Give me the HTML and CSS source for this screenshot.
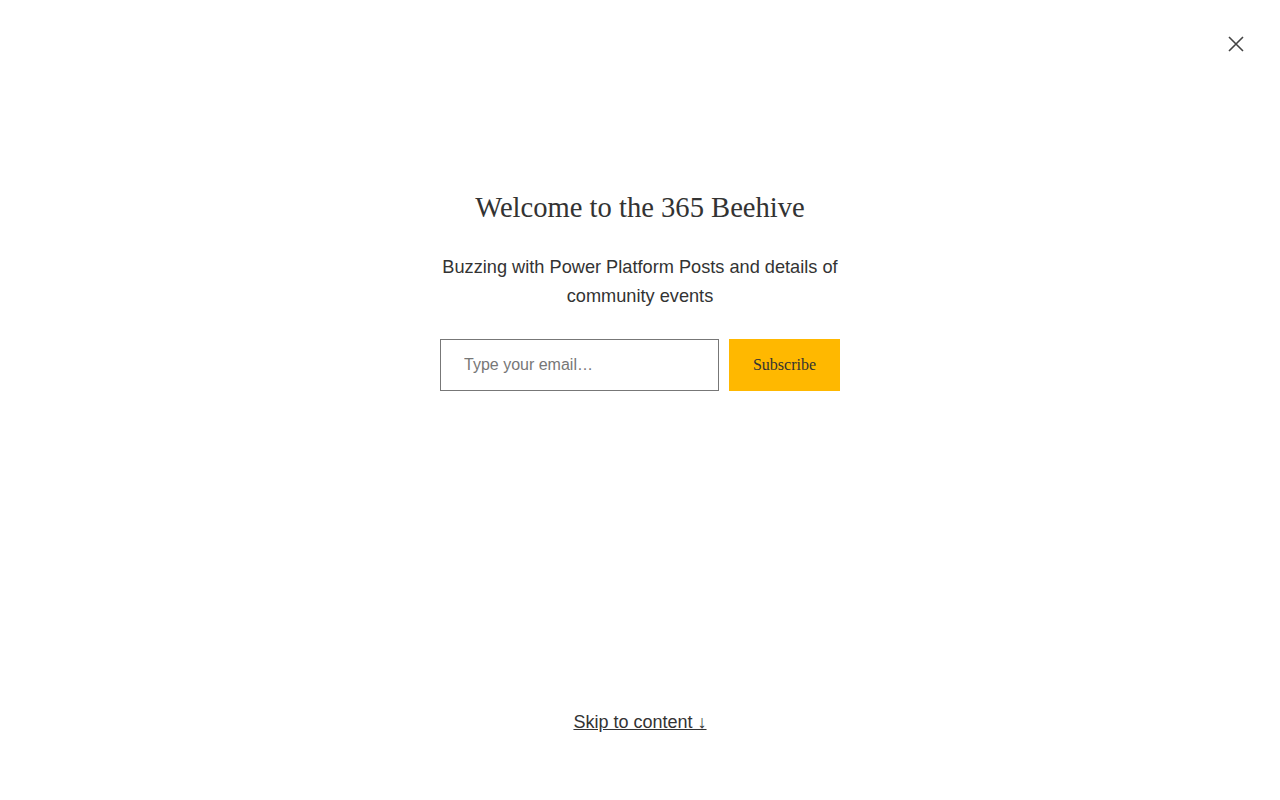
FILE: index.html
```html
<!DOCTYPE html>
<html lang="en">
<head>
<meta charset="utf-8">
<title>Welcome to the 365 Beehive</title>
<link rel="stylesheet" href="styles.css">
</head>
<body>
<div class="page">
  <button class="close" aria-label="Close">
    <svg width="18" height="18" viewBox="0 0 18 18"><path d="M2 2 L16 16 M16 2 L2 16" stroke="#444" stroke-width="1.6" fill="none"/></svg>
  </button>
  <main class="panel">
    <h1 class="title">Welcome to the 365 Beehive</h1>
    <p class="lead">Buzzing with Power Platform Posts and details of community events</p>
    <form class="signup">
      <input class="email" type="email" placeholder="Type your email…">
      <button class="subscribe" type="button">Subscribe</button>
    </form>
  </main>
  <a class="skip" href="#">Skip to content ↓</a>
</div>
</body>
</html>
```
FILE: styles.css
```css
html, body {
  margin: 0;
  padding: 0;
  background: #fff;
}
.page {
  position: relative;
  height: 800px;
  display: flex;
  flex-direction: column;
  align-items: center;
  color: #333;
}
.close {
  position: absolute;
  top: 35px;
  right: 35px;
  width: 18px;
  height: 18px;
  padding: 0;
  border: 0;
  background: none;
  cursor: pointer;
}
.close svg { display: block; }
.panel {
  width: 400px;
  padding-top: 191px;
  display: flex;
  flex-direction: column;
  align-items: center;
  flex: 1;
}
.title {
  margin: 0;
  font-family: "Liberation Serif", "Times New Roman", serif;
  font-weight: normal;
  font-size: 28.6px;
  line-height: 34px;
  color: #333;
  text-align: center;
}
.lead {
  margin: 28px 0 0;
  font-family: "Liberation Sans", Arial, sans-serif;
  font-size: 18.2px;
  line-height: 29px;
  text-align: center;
  color: #333;
}
.signup {
  margin-top: 28px;
  display: flex;
  gap: 10px;
  width: 400px;
}
.email {
  box-sizing: border-box;
  width: 279px;
  height: 52px;
  border: 1px solid #777;
  padding: 0 23px;
  font-family: "Liberation Sans", Arial, sans-serif;
  font-size: 16px;
  color: #333;
  outline: none;
}
.email::placeholder { color: #777; }
.subscribe {
  width: 111px;
  height: 52px;
  border: 0;
  background: #ffb800;
  color: #333;
  font-family: "Liberation Serif", "Times New Roman", serif;
  font-size: 16px;
  padding: 0;
  cursor: pointer;
}
.skip {
  margin-bottom: 67px;
  font-family: "Liberation Sans", Arial, sans-serif;
  font-size: 18px;
  line-height: 22px;
  color: #333;
  text-decoration: underline;
}
```
